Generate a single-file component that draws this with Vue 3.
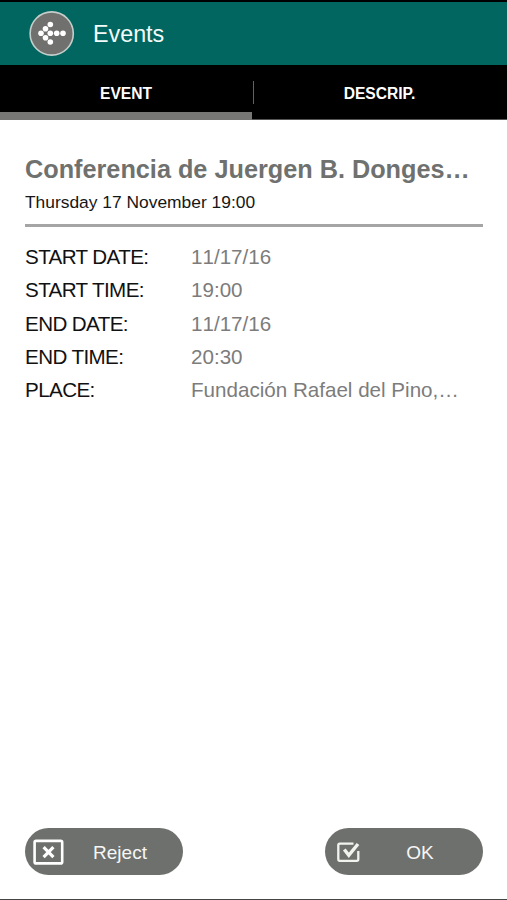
<template>
  <div class="screen">
    <header class="header">
      <button class="back" aria-label="Back">
        <svg width="46" height="46" viewBox="0 0 46 46">
          <circle cx="22.7" cy="22.5" r="21.6" fill="#70716e" stroke="#c5cecb" stroke-width="1.6" />
          <g fill="#fff">
            <circle v-for="([x, y], i) in arrowDots" :key="i" :cx="x" :cy="y" r="2.8" />
          </g>
        </svg>
      </button>
      <h1>Events</h1>
    </header>

    <nav class="tabs">
      <button
        v-for="tab in tabs"
        :key="tab"
        :class="['tab', { active: tab === activeTab }]"
        @click="activeTab = tab"
      >
        {{ tab }}
      </button>
    </nav>

    <main class="content">
      <h2>Conferencia de Juergen B. Donges…</h2>
      <p class="date">Thursday 17 November 19:00</p>
      <dl class="details">
        <div v-for="row in details" :key="row.label" class="row">
          <dt>{{ row.label }}</dt>
          <dd>{{ row.value }}</dd>
        </div>
      </dl>
    </main>

    <footer class="actions">
      <button class="action">
        <svg class="icon" width="32" height="28" viewBox="0 0 32 28" fill="none" stroke="#fff">
          <rect x="1.6" y="2.9" width="27.6" height="22.5" rx="1.5" stroke-width="2.6" />
          <path d="M10.6 9.2 20.4 19.2M20.4 9.2 10.6 19.2" stroke-width="3.2" />
        </svg>
        <span>Reject</span>
      </button>
      <button class="action">
        <svg class="icon" width="32" height="28" viewBox="0 0 32 28" fill="none" stroke="#f1f3ee">
          <path d="M20.5 5.7H6.8a1.5 1.5 0 0 0-1.5 1.5V21.3a1.5 1.5 0 0 0 1.5 1.5H23.8a1.5 1.5 0 0 0 1.5-1.5V13" stroke-width="2.3" />
          <path d="M11.3 11.5 15.8 17.3 25 6" stroke-width="3.4" />
        </svg>
        <span>OK</span>
      </button>
    </footer>
  </div>
</template>

<script setup>
import { ref } from 'vue'

const tabs = ['EVENT', 'DESCRIP.']
const activeTab = ref('EVENT')

// back arrow made of dots, pointing left
const arrowDots = [
  [21.3, 13.5],
  [16.5, 17.8],
  [12, 22.3],
  [16.5, 26.8],
  [21.3, 31],
  [21.3, 22.3],
  [27.7, 22.3],
  [34, 22.3]
]

const details = [
  { label: 'START DATE:', value: '11/17/16' },
  { label: 'START TIME:', value: '19:00' },
  { label: 'END DATE:', value: '11/17/16' },
  { label: 'END TIME:', value: '20:30' },
  { label: 'PLACE:', value: 'Fundación Rafael del Pino,…' }
]
</script>

<style>
body {
  margin: 0;
  background: #fff;
}
</style>

<style scoped>
.screen {
  box-sizing: border-box;
  display: flex;
  flex-direction: column;
  height: 900px;
  border-top: 2px solid #000;
  border-bottom: 1px solid #444;
  background: #fff;
  font-family: "Liberation Sans", Arial, sans-serif;
}

button {
  padding: 0;
  border: none;
  font-family: inherit;
  cursor: pointer;
}

h1,
h2,
p,
dl,
dd {
  margin: 0;
}

.header {
  display: flex;
  align-items: center;
  height: 63px;
  padding-left: 29px;
  background: #00665f;
}

.back {
  width: 46px;
  height: 46px;
  background: none;
}

.back svg {
  display: block;
}

h1 {
  margin-left: 18px;
  color: #f4fbfa;
  font-size: 23.3px;
  font-weight: normal;
  line-height: 28px;
}

.tabs {
  box-sizing: border-box;
  display: flex;
  height: 55px;
  border-bottom: 1px solid #555;
  background: #000;
}

.tab {
  box-sizing: border-box;
  position: relative;
  flex: 1;
  height: 55px;
  padding-top: 3px;
  background: none;
  color: #fff;
  font-size: 15.6px;
  font-weight: bold;
}

.tab:first-child {
  flex: 0 0 252px;
}

.tab.active {
  box-shadow: inset 0 -8px #777876;
}

.tab + .tab::before {
  content: "";
  position: absolute;
  top: 16px;
  left: 1px;
  width: 1px;
  height: 23px;
  background: #626262;
}

.content {
  flex: 1;
  padding: 34px 24px 0 25px;
}

h2 {
  color: #6f716f;
  font-size: 25.25px;
  line-height: 30px;
  white-space: nowrap;
}

.date {
  margin-top: 7px;
  padding-bottom: 11px;
  border-bottom: 3px solid #a5a5a5;
  color: #161616;
  font-size: 17.4px;
  line-height: 22px;
}

.details {
  padding-top: 13px;
}

.row {
  display: flex;
  height: 33.25px;
  font-size: 20.6px;
  line-height: 33px;
  white-space: nowrap;
}

dt {
  width: 166px;
  color: #111;
  letter-spacing: -0.6px;
}

dd {
  color: #7c7c7c;
  font-kerning: none;
}

.actions {
  display: flex;
  justify-content: space-between;
  padding: 0 24px 24px 25px;
}

.action {
  display: flex;
  align-items: center;
  width: 158px;
  height: 47px;
  border-radius: 24px;
  background: #6e706d;
  color: #f6f6f6;
  font-size: 19px;
}

.icon {
  flex: none;
  margin-left: 8px;
}

.action span {
  flex: 1;
  padding: 2px 8px 0 0;
  text-align: center;
}
</style>
